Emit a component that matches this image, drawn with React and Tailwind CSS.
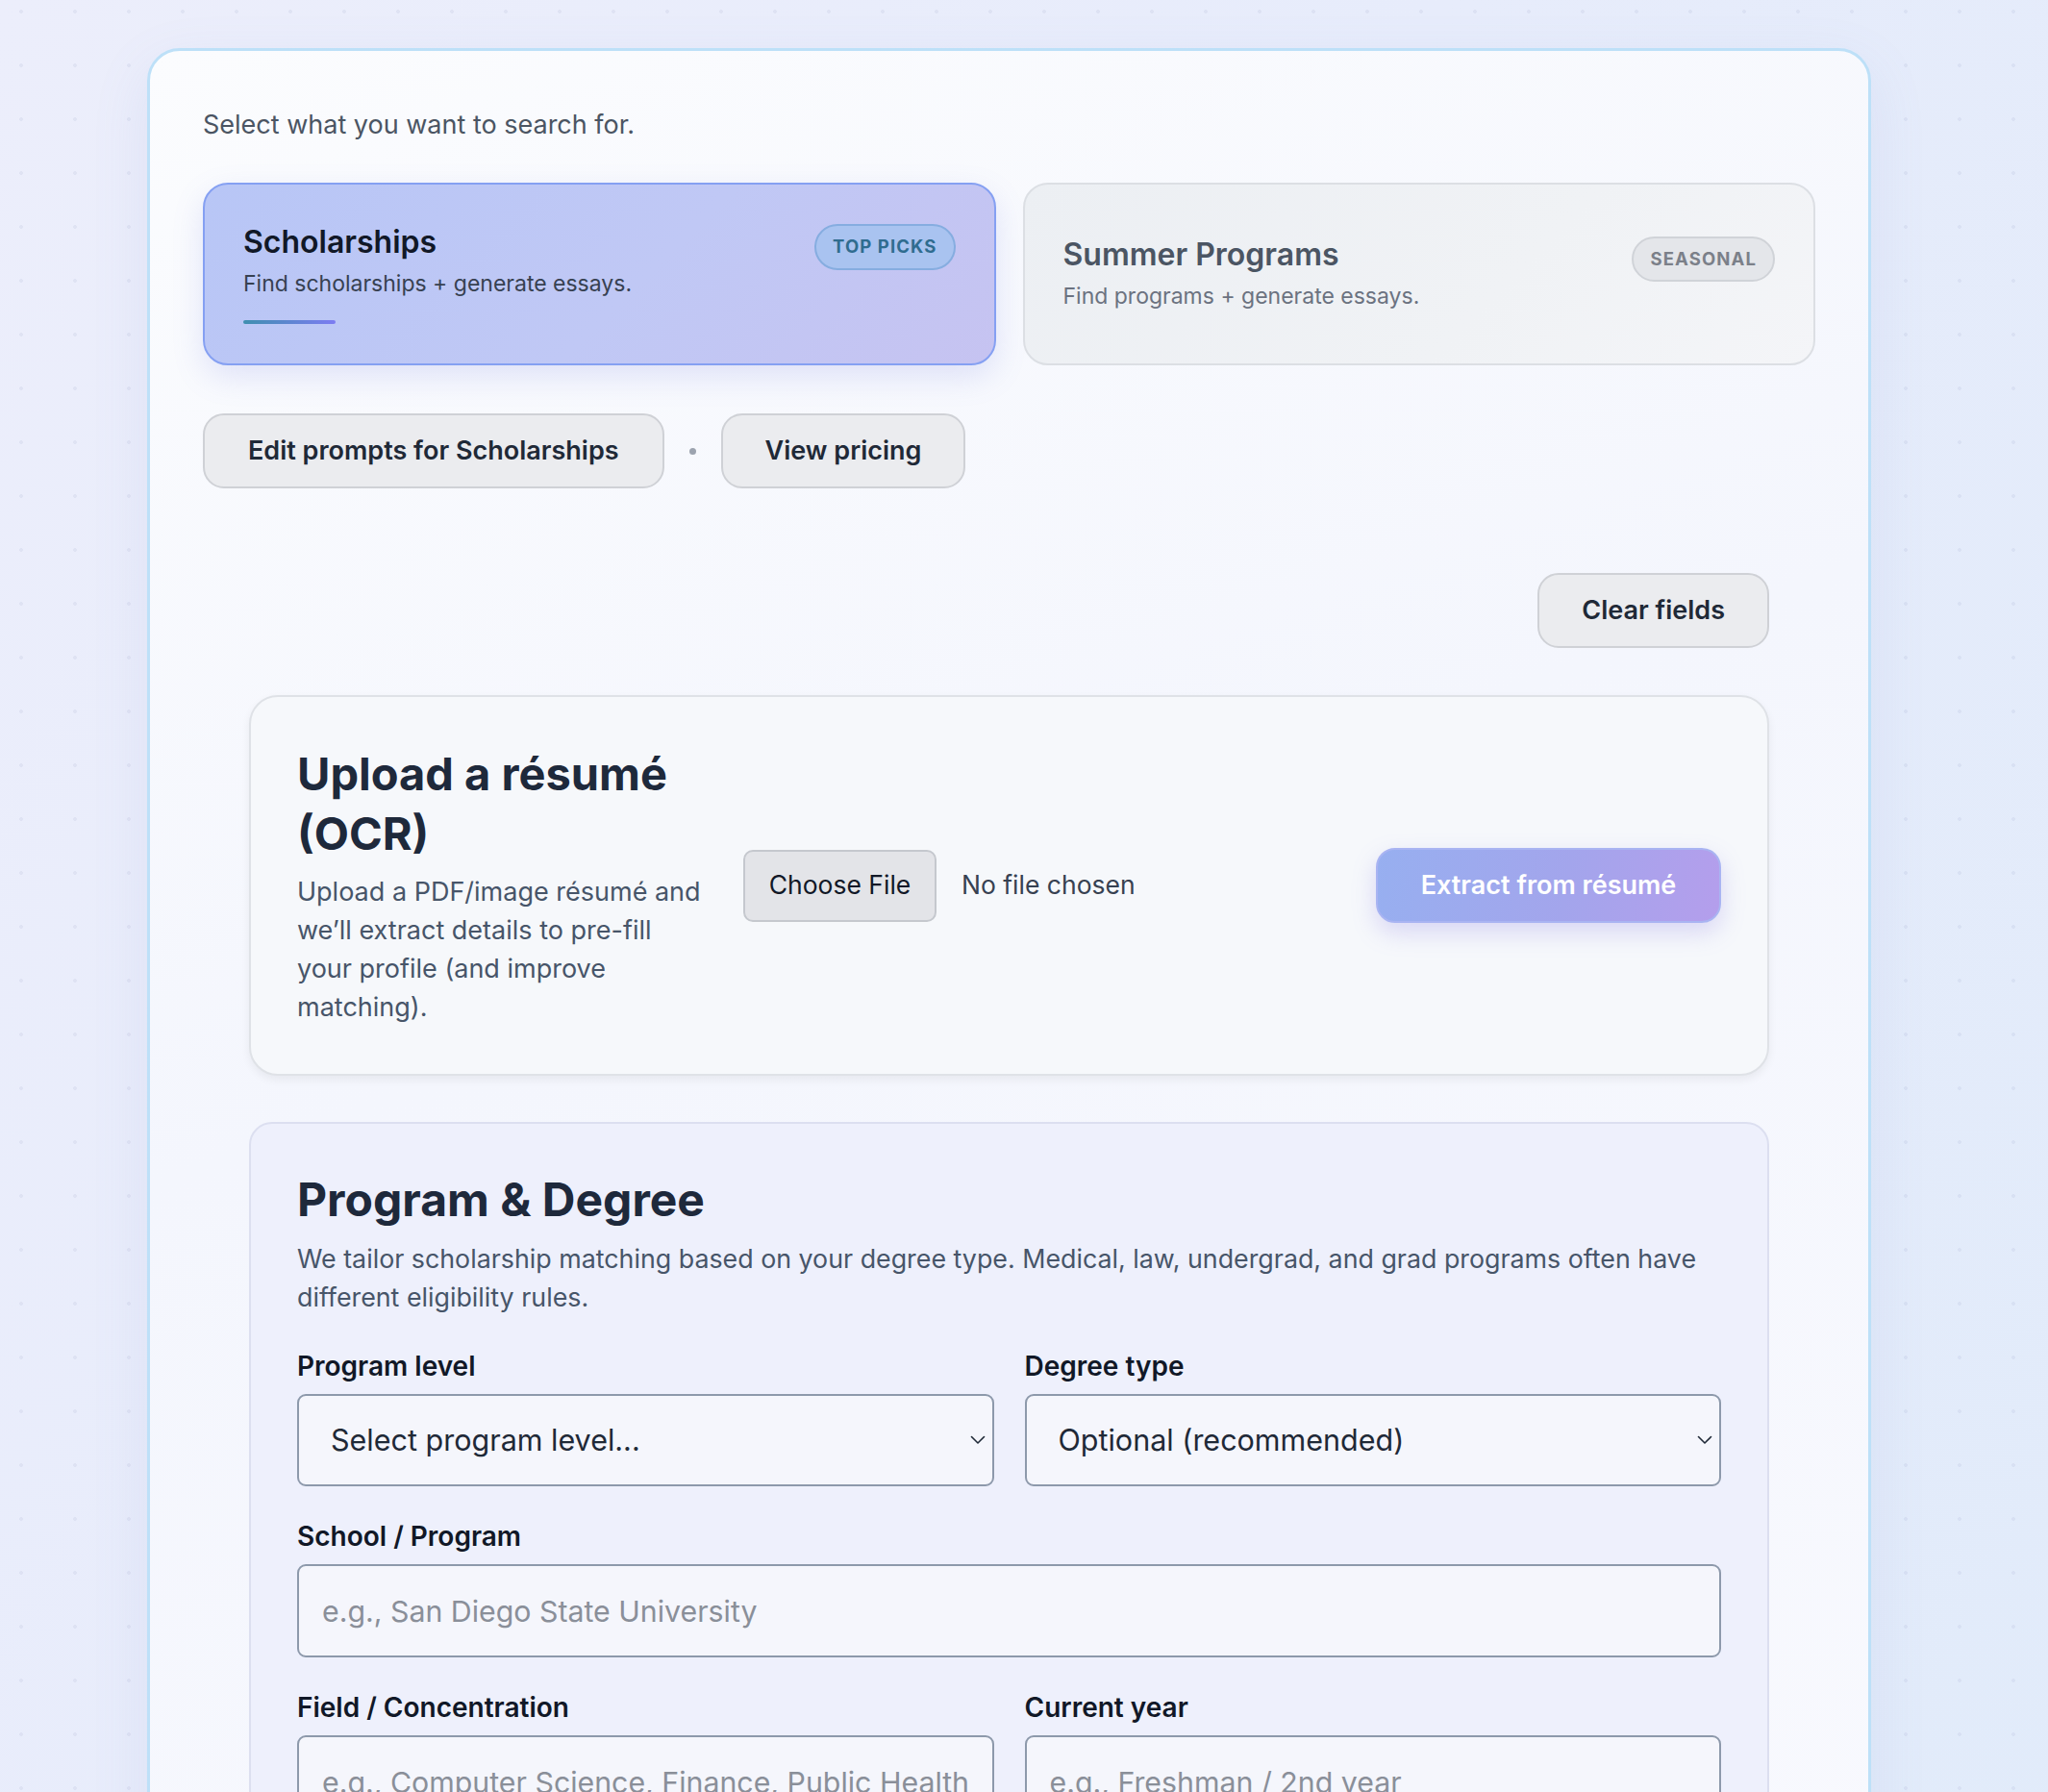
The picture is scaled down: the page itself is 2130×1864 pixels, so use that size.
import React from 'react'

const Chevron = () => (
    <svg className="w-[16px] h-[10px] shrink-0" viewBox="0 0 16 10" fill="none">
        <path d="M1.5 1.5 8 8l6.5-6.5" stroke="#1f2937" strokeWidth="1.6" strokeLinecap="round" strokeLinejoin="round" />
    </svg>
)

const Field = ({ label, children }) => (
    <div className="flex flex-col">
        <label className="text-[28px] leading-[36px] font-semibold text-[#111827] mb-[11px]">{label}</label>
        {children}
    </div>
)

const SelectBox = ({ value }) => (
    <div className="h-[96px] rounded-[9px] border-2 border-[#8d99ab] bg-[#f5f6fc] flex items-center justify-between pl-[33px] pr-[7px]">
        <span className="text-[30.5px] text-[#1f2937]">{value}</span>
        <Chevron />
    </div>
)

const TextBox = ({ placeholder }) => (
    <input
        type="text"
        placeholder={placeholder}
        className="h-[97px] w-full rounded-[9px] border-2 border-[#8d99ab] bg-[#f5f6fc] px-[24px] text-[30.3px] text-[#1f2937] placeholder:text-[#8a8f99] outline-none"
    />
)

const App = () => {
    return (
        <div className="min-h-screen w-full overflow-hidden pt-[50px] pb-[60px] font-['Inter',sans-serif] bg-[radial-gradient(circle,rgba(140,150,190,0.12)_1.6px,transparent_2.2px),linear-gradient(120deg,#eceefb_0%,#e7ecfb_45%,#e1ebfa_100%)] bg-[length:56px_56px,100%_100%] bg-[position:-6px_-16px,0_0]">
            <div className="ml-[153px] w-[1793px] rounded-[34px] border-[3px] border-[#bde0f8] bg-[linear-gradient(160deg,#fbfcfe_0%,#f4f6fd_45%,#f8f9fe_100%)] px-[55px] pt-[58px] pb-[60px] shadow-[0_20px_60px_rgba(120,140,200,0.12)]">
                <p className="text-[27px] leading-[38px] text-[#4b5563]">Select what you want to search for.</p>

                <div className="mt-[41px] grid grid-cols-2 gap-[28px]">
                    <div className="h-[190px] rounded-[26px] border-2 border-[#85a0f2] bg-[linear-gradient(135deg,#b8c6f6_0%,#c0c8f5_55%,#c6c3f1_100%)] px-[40px] flex items-center shadow-[0_12px_32px_rgba(110,120,220,0.18)]">
                        <div className="flex w-full items-start justify-between">
                            <div className="flex flex-col">
                                <h3 className="text-[32px] leading-[38px] font-semibold text-[#111827]">Scholarships</h3>
                                <p className="mt-[8px] text-[23px] leading-[32px] text-[#374151]">Find scholarships + generate essays.</p>
                                <div className="mt-[22px] h-[4px] w-[96px] rounded-full bg-[linear-gradient(90deg,#3f8fb0,#7d7cf2)]" />
                            </div>
                            <span className="h-[48px] rounded-full border-2 border-[#86ade0] bg-[#a9c3f0] px-[17px] flex items-center text-[18.5px] font-bold tracking-[0.06em] text-[#2f6c8f]">TOP PICKS</span>
                        </div>
                    </div>
                    <div className="h-[190px] rounded-[26px] border-2 border-[#dcdfe4] bg-[linear-gradient(135deg,#eceff3_0%,#f0f2f5_60%,#f4f5f8_100%)] px-[40px] flex items-center">
                        <div className="flex w-full items-start justify-between">
                            <div className="flex flex-col">
                                <h3 className="text-[32px] leading-[38px] font-semibold text-[#4b5563]">Summer Programs</h3>
                                <p className="mt-[8px] text-[23px] leading-[32px] text-[#6b7280]">Find programs + generate essays.</p>
                            </div>
                            <span className="h-[47px] rounded-full border-2 border-[#d0d3d8] bg-[#e4e6ea] px-[17px] flex items-center text-[18.5px] font-bold tracking-[0.06em] text-[#7b8089]">SEASONAL</span>
                        </div>
                    </div>
                </div>

                <div className="mt-[50px] flex items-center gap-[26px]">
                    <button className="h-[78px] rounded-[22px] border-2 border-[#cfd1d6] bg-[#ebecef] px-[45px] text-[27px] font-semibold text-[#1f2937]">Edit prompts for Scholarships</button>
                    <span className="h-[7px] w-[7px] rounded-full bg-[#9ca3af]" />
                    <button className="h-[78px] rounded-[22px] border-2 border-[#cfd1d6] bg-[#ebecef] px-[44px] text-[27px] font-semibold text-[#1f2937]">View pricing</button>
                </div>

                <div className="px-[48px]">
                    <div className="mt-[88px] flex justify-end">
                        <button className="h-[78px] rounded-[22px] border-2 border-[#cfd1d6] bg-[#ebecef] px-[44px] text-[27px] font-semibold text-[#1f2937]">Clear fields</button>
                    </div>

                    <div className="mt-[49px] rounded-[30px] border-2 border-[#dfe2e7] bg-[#f6f8fb] px-[48px] py-[49px] flex items-center shadow-[0_4px_10px_rgba(0,0,0,0.06)]">
                        <div className="w-[432px] shrink-0">
                            <h2 className="text-[47px] leading-[62px] font-bold text-[#1e293b]">Upload a résumé (OCR)</h2>
                            <p className="mt-[10px] text-[27px] leading-[40px] text-[#475569]">Upload a PDF/image résumé and we’ll extract details to pre-fill your profile (and improve matching).</p>
                        </div>
                        <div className="ml-[32px] flex items-center">
                            <span className="h-[75px] w-[201px] rounded-[10px] border-2 border-[#c5c8ce] bg-[#e3e4e8] flex items-center justify-center text-[26.5px] text-[#111827]">Choose File</span>
                            <span className="ml-[26px] text-[26.5px] text-[#374151]">No file chosen</span>
                        </div>
                        <button className="ml-auto h-[78px] w-[359px] rounded-[20px] border-2 border-[#a9b4f2] bg-[linear-gradient(100deg,#97aff0_0%,#a3a5ec_55%,#b49eec_100%)] text-[27px] font-semibold text-white shadow-[0_10px_24px_rgba(140,130,230,0.28)]">Extract from résumé</button>
                    </div>

                    <div className="mt-[48px] rounded-[24px] border-2 border-[#dcdff0] bg-[#eef0fc] px-[48px] pt-[49px] pb-[60px]">
                        <h2 className="text-[48px] leading-[60px] font-bold text-[#1e293b]">Program &amp; Degree</h2>
                        <p className="mt-[11px] text-[26.8px] leading-[40px] text-[#475569]">We tailor scholarship matching based on your degree type. Medical, law, undergrad, and grad programs often have different eligibility rules.</p>

                        <div className="mt-[34px] grid grid-cols-2 gap-x-[32px] gap-y-[34px]">
                            <Field label="Program level">
                                <SelectBox value="Select program level..." />
                            </Field>
                            <Field label="Degree type">
                                <SelectBox value="Optional (recommended)" />
                            </Field>
                            <div className="col-span-2">
                                <Field label="School / Program">
                                    <TextBox placeholder="e.g., San Diego State University" />
                                </Field>
                            </div>
                            <Field label="Field / Concentration">
                                <TextBox placeholder="e.g., Computer Science, Finance, Public Health" />
                            </Field>
                            <Field label="Current year">
                                <TextBox placeholder="e.g., Freshman / 2nd year" />
                            </Field>
                        </div>
                    </div>
                </div>
            </div>
        </div>
    )
}

export default App
